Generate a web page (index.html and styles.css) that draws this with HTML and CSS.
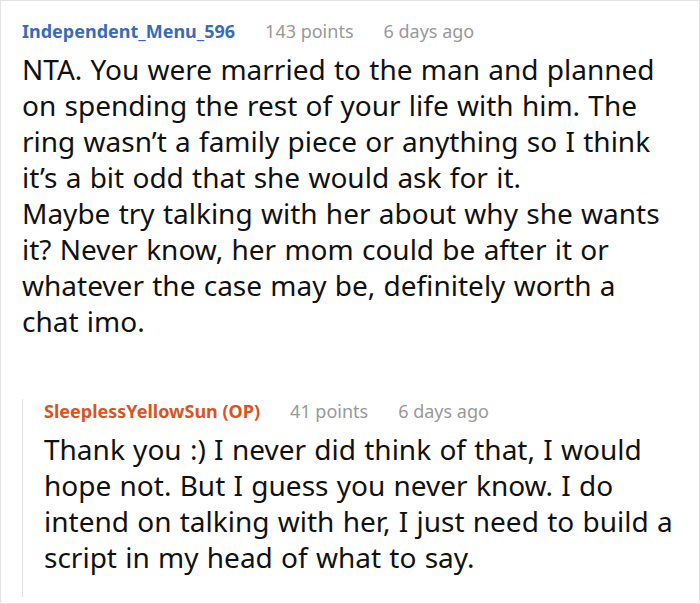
FILE: index.html
```html
<!DOCTYPE html>
<html>
<head>
<meta charset="utf-8">
<link rel="stylesheet" href="styles.css">
</head>
<body>
<div class="frame">
  <div class="comment">
    <div class="meta">
      <span class="author">Independent_Menu_596</span>
      <span class="info">143 points</span>
      <span class="info">6 days ago</span>
    </div>
    <div class="text">NTA. You were married to the man and planned on spending the rest of your life with him. The ring wasn’t a family piece or anything so I think it’s a bit odd that she would ask for it.<br>Maybe try talking with her about why she wants it? Never know, her mom could be after it or whatever the case may be, definitely worth a chat imo.</div>
    <div class="reply">
      <div class="meta">
        <span class="author op">SleeplessYellowSun (OP)</span>
        <span class="info">41 points</span>
        <span class="info">6 days ago</span>
      </div>
      <div class="text">Thank you :) I never did think of that, I would hope not. But I guess you never know. I do intend on talking with her, I just need to build a script in my head of what to say.</div>
    </div>
  </div>
</div>
</body>
</html>
```
FILE: styles.css
```css
html, body {
  margin: 0;
  padding: 0;
  background: #fff;
}
.frame {
  width: 700px;
  height: 604px;
  box-sizing: border-box;
  border: 1px solid #e3e3e3;
  overflow: hidden;
  font-family: "Noto Sans", "Open Sans", sans-serif;
}
.comment {
  padding: 18px 24px 0 21px;
}
.meta {
  display: flex;
  gap: 30px;
  font-size: 18px;
  line-height: 24px;
  height: 24px;
  white-space: nowrap;
}
.author {
  font-weight: bold;
  color: #3b6bb6;
}
.author.op {
  color: #d9541f;
}
.info {
  color: #999;
}
.text {
  margin-top: 8px;
  font-size: 28px;
  word-spacing: 1px;
  line-height: 36px;
  color: #111;
}
.reply {
  margin-top: 60px;
  border-left: 1px solid #e0e0e0;
  padding: 0 0 22px 21px;
}
.reply .text {
  margin-top: 8px;
}
```
